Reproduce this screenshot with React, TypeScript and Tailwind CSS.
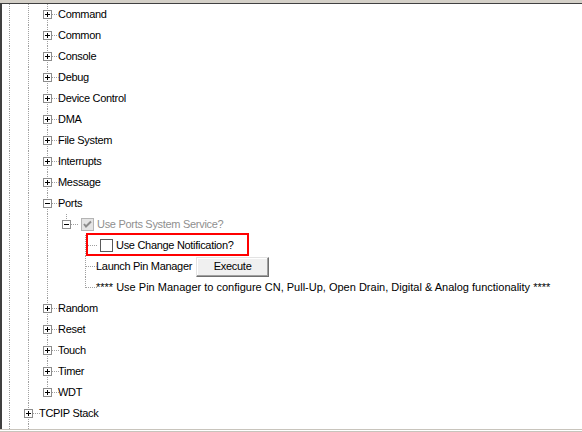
import React from "react";

type Kind = "line" | "tee" | "last" | "empty";

function Box({ sign }: { sign: "+" | "-" }) {
  return (
    <div className="absolute left-[3px] top-[6px] w-[9px] h-[9px] border border-[#8c8c8c] bg-white">
      <div className="absolute left-[1px] top-[3px] w-[5px] h-[1px] bg-black" />
      {sign === "+" && <div className="absolute left-[3px] top-[1px] w-[1px] h-[5px] bg-black" />}
    </div>
  );
}

function Cell({ kind, box }: { kind: Kind; box?: "+" | "-" }) {
  return (
    <div className="relative w-[19px] h-full shrink-0">
      {(kind === "line" || kind === "tee") && (
        <div className="absolute left-[7px] top-0 bottom-0 border-l border-dotted border-[#a0a0a0]" />
      )}
      {kind === "last" && (
        <div className="absolute left-[7px] top-0 h-[11px] border-l border-dotted border-[#a0a0a0]" />
      )}
      {(kind === "tee" || kind === "last") && (
        <div className="absolute left-[7px] right-0 top-[10px] border-t border-dotted border-[#a0a0a0]" />
      )}
      {box && <Box sign={box} />}
    </div>
  );
}

function Label({ children, gray, wide }: { children: React.ReactNode; gray?: boolean; wide?: boolean }) {
  return (
    <span
      className={
        "ml-[-1px] whitespace-nowrap text-[11px] leading-none " +
        (wide ? "tracking-normal " : "tracking-[-0.3px] ") +
        (gray ? "text-[#8f8f8f]" : "text-black")
      }
    >
      {children}
    </span>
  );
}

function Checkbox({ checked, disabled }: { checked?: boolean; disabled?: boolean }) {
  return (
    <div
      className={
        "relative ml-[3px] mr-[4px] w-[13px] h-[13px] shrink-0 border " +
        (disabled ? "border-[#b4b4b4] bg-[#e4e4e4]" : "border-[#5a5a5a] bg-white")
      }
    >
      {checked && (
        <svg className="absolute left-[1px] top-[1px]" width="9" height="9" viewBox="0 0 9 9">
          <path d="M1 4 L3 6.5 L8 1.5" stroke={disabled ? "#8c8c8c" : "#000"} strokeWidth="2" fill="none" />
        </svg>
      )}
    </div>
  );
}

const services = ["Command", "Common", "Console", "Debug", "Device Control", "DMA", "File System", "Interrupts", "Message"];
const after = ["Random", "Reset", "Touch", "Timer", "WDT"];

export default function App() {
  return (
    <div
      className="w-[582px] h-[432px] bg-white flex flex-col overflow-hidden"
      style={{ fontFamily: '"Liberation Sans", Arial, sans-serif' }}
    >
      <div className="h-[3px] bg-[#d4d0c8] shrink-0" />
      <div className="flex-1 flex flex-col border-t border-[#404040] border-l-2 border-l-[#404040]">
        {services.map((s) => (
          <div key={s} className="flex h-[21px] items-center shrink-0">
            <Cell kind="line" />
            <Cell kind="line" />
            <Cell kind="tee" box="+" />
            <Label>{s}</Label>
          </div>
        ))}
        <div className="flex h-[21px] items-center shrink-0">
          <Cell kind="line" />
          <Cell kind="line" />
          <Cell kind="tee" box="-" />
          <Label>Ports</Label>
        </div>
        <div className="flex h-[21px] items-center shrink-0">
          <Cell kind="line" />
          <Cell kind="line" />
          <Cell kind="line" />
          <Cell kind="last" box="-" />
          <Checkbox checked disabled />
          <Label gray>Use Ports System Service?</Label>
        </div>
        <div className="relative flex h-[21px] items-center shrink-0">
          <Cell kind="line" />
          <Cell kind="line" />
          <Cell kind="line" />
          <Cell kind="empty" />
          <Cell kind="tee" />
          <Checkbox />
          <Label>Use Change Notification?</Label>
          <div className="absolute left-[84px] top-[-2px] w-[163px] h-[23px] border-2 border-[#ff0000]" />
        </div>
        <div className="flex h-[21px] items-center shrink-0">
          <Cell kind="line" />
          <Cell kind="line" />
          <Cell kind="line" />
          <Cell kind="empty" />
          <Cell kind="tee" />
          <Label>Launch Pin Manager</Label>
          <button className="ml-[4px] h-[20px] w-[73px] bg-[#f0f0f0] border border-t-[#e3e3e3] border-l-[#e3e3e3] border-r-[#6f6f6f] border-b-[#6f6f6f] shadow-[inset_-1px_-1px_0_#a0a0a0,inset_1px_1px_0_#ffffff] text-[11px] leading-none tracking-[-0.3px] text-black">
            Execute
          </button>
        </div>
        <div className="flex h-[21px] items-center shrink-0">
          <Cell kind="line" />
          <Cell kind="line" />
          <Cell kind="line" />
          <Cell kind="empty" />
          <Cell kind="last" />
          <Label wide>**** Use Pin Manager to configure CN, Pull-Up, Open Drain, Digital &amp; Analog functionality ****</Label>
        </div>
        {after.map((s, i) => (
          <div key={s} className="flex h-[21px] items-center shrink-0">
            <Cell kind="line" />
            <Cell kind="line" />
            <Cell kind={i === after.length - 1 ? "last" : "tee"} box="+" />
            <Label>{s}</Label>
          </div>
        ))}
        <div className="flex h-[21px] items-center shrink-0">
          <Cell kind="line" />
          <Cell kind="tee" box="+" />
          <Label>TCPIP Stack</Label>
        </div>
        <div className="flex flex-1">
          <Cell kind="line" />
          <Cell kind="line" />
        </div>
      </div>
      <div className="h-[1px] bg-[#c8c4bc] shrink-0" />
      <div className="h-[1px] bg-white shrink-0" />
      <div className="h-[1px] bg-[#c8c4bc] shrink-0" />
    </div>
  );
}
